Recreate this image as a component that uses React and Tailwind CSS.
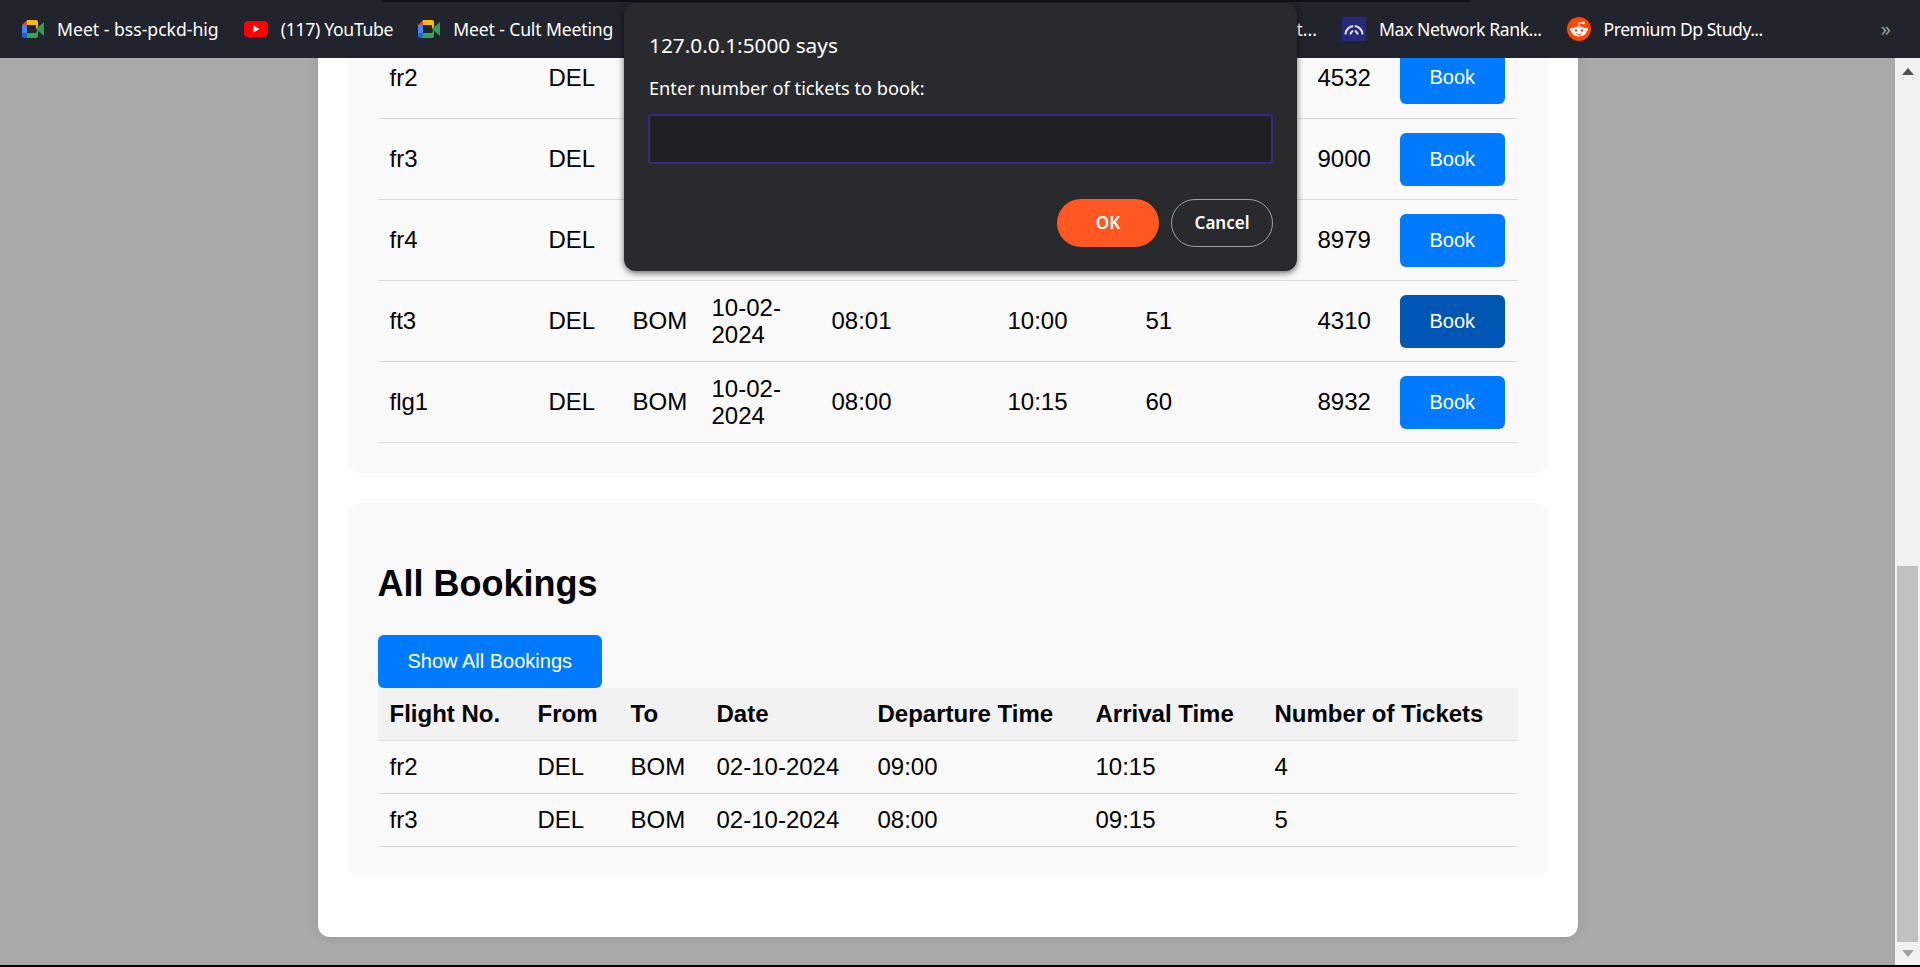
import React from 'react';

const flights = [
  { no: 'fr2', from: 'DEL', fare: 4532 },
  { no: 'fr3', from: 'DEL', fare: 9000 },
  { no: 'fr4', from: 'DEL', fare: 8979 },
  { no: 'ft3', from: 'DEL', to: 'BOM', date: '10-02-2024', dep: '08:01', arr: '10:00', seats: 51, fare: 4310, active: true },
  { no: 'flg1', from: 'DEL', to: 'BOM', date: '10-02-2024', dep: '08:00', arr: '10:15', seats: 60, fare: 8932 }
];

const bookings = [
  { no: 'fr2', from: 'DEL', to: 'BOM', date: '02-10-2024', dep: '09:00', arr: '10:15', tickets: 4 },
  { no: 'fr3', from: 'DEL', to: 'BOM', date: '02-10-2024', dep: '08:00', arr: '09:15', tickets: 5 }
];

const MeetIcon = () => (
  <svg viewBox="0 0 22 18" className="w-[22px] h-[18px] shrink-0">
    <path d="M5 0h9v5H5z" fill="#fbbc04" />
    <path d="M5 0v5H0z" fill="#ea4335" />
    <path d="M0 5h5v8H0z" fill="#4285f4" />
    <path d="M0 13h5v5H2a2 2 0 0 1-2-2z" fill="#1967d2" />
    <path d="M5 13h9v5H5z" fill="#34a853" />
    <path d="M14 0a2 2 0 0 1 2 2v5l-2 2-0-4z" fill="#fbbc04" />
    <path d="M14 13l2-4v7a2 2 0 0 1-2 2z" fill="#34a853" />
    <path d="M14 9l8-7v14z" fill="#2f9e57" />
    <path d="M5 5h9v8H5z" fill="#21242d" />
  </svg>
);

const YoutubeIcon = () => (
  <svg viewBox="0 0 24 16" className="w-6 h-4 shrink-0">
    <rect width="24" height="16" rx="4" fill="#ff0000" />
    <path d="M9.5 4.5v7l6-3.5z" fill="#ffffff" />
  </svg>
);

const MaxIcon = () => (
  <svg viewBox="0 0 24 24" className="w-6 h-6 shrink-0">
    <rect width="24" height="24" fill="#27297f" />
    <path d="M3.5 17.5a8.5 8.5 0 0 1 17 0" fill="none" stroke="#e8e8f4" strokeWidth="2" />
    <path d="M8.5 17.5a3.5 3.5 0 0 1 7 0" fill="none" stroke="#e8e8f4" strokeWidth="2" />
    <path d="M12 8v8" stroke="#27297f" strokeWidth="1.5" />
  </svg>
);

const RedditIcon = () => (
  <svg viewBox="0 0 24 24" className="w-6 h-6 shrink-0">
    <circle cx="12" cy="12" r="12" fill="#ff4500" />
    <ellipse cx="12" cy="14.5" rx="7.5" ry="5" fill="#ffffff" />
    <circle cx="4.8" cy="12.5" r="1.7" fill="#ffffff" />
    <circle cx="19.2" cy="12.5" r="1.7" fill="#ffffff" />
    <circle cx="9" cy="13.5" r="1.3" fill="#ff4500" />
    <circle cx="15" cy="13.5" r="1.3" fill="#ff4500" />
    <path d="M12 9.5V5.5l4 .8" fill="none" stroke="#ffffff" strokeWidth="1" />
    <circle cx="16.5" cy="6" r="1.4" fill="#ffffff" />
    <path d="M9 16.5c1.8 1.3 4.2 1.3 6 0" fill="none" stroke="#ff4500" strokeWidth="0.9" />
  </svg>
);

const Bookmark = ({ icon, label, className }) => (
  <div className="flex items-center gap-[13px]">
    {icon}
    <span className={className}>{label}</span>
  </div>
);

const BlueButton = ({ children, active }) => (
  <button className={`block h-[53px] px-[30px] rounded-md text-white text-[20px] ${active ? 'bg-[#0056b3]' : 'bg-[#007bff]'}`}>
    {children}
  </button>
);

const App = () => {
  return (
    <div className="relative h-screen flex flex-col overflow-hidden bg-black font-['Liberation_Sans',Arial,sans-serif] text-black">
      {/* bookmarks bar */}
      <div className="h-[58px] shrink-0 flex items-center pl-[22px] pr-[29px] gap-[25px] bg-[#21242d] text-white text-[17.6px] font-['Noto_Sans',sans-serif]">
        <Bookmark icon={<MeetIcon />} label="Meet - bss-pckd-hig" />
        <Bookmark icon={<YoutubeIcon />} label="(117) YouTube" className="tracking-[-0.3px]" />
        <Bookmark icon={<MeetIcon />} label="Meet - Cult Meeting" className="tracking-[-0.15px]" />
        <span className="flex-1 text-right">t...</span>
        <Bookmark icon={<MaxIcon />} label="Max Network Rank..." className="tracking-[-0.4px]" />
        <Bookmark icon={<RedditIcon />} label="Premium Dp Study..." className="tracking-[-0.5px]" />
        <span className="ml-[93px] text-[#9aa0a6] text-[20px]">»</span>
      </div>

      <div className="flex-1 min-h-0 flex mb-[2px]">
        {/* page, scrolled to its end */}
        <div className="flex-1 flex flex-col justify-end overflow-hidden bg-[#a9a9a9] pb-[28px]">
          <div className="w-[1260px] mx-auto shrink-0 bg-white rounded-xl px-[30px] pb-[60px] flex flex-col gap-[30px] shadow-[0_0_12px_rgba(0,0,0,0.1)]">
            <div className="bg-[#f9f9f9] rounded-b-xl px-[30px] pb-[30px]">
              <table className="w-[1140px] table-fixed border-collapse text-[24px] leading-[27px]">
                <colgroup>
                  <col className="w-[159px]" />
                  <col className="w-[84px]" />
                  <col className="w-[79px]" />
                  <col className="w-[120px]" />
                  <col className="w-[176px]" />
                  <col className="w-[138px]" />
                  <col className="w-[172px]" />
                  <col className="w-[82px]" />
                  <col className="w-[130px]" />
                </colgroup>
                <tbody>
                  {flights.map((f) => (
                    <tr key={f.no} className="h-[81px] border-b border-[#dddddd]">
                      <td className="px-3">{f.no}</td>
                      <td className="px-3">{f.from}</td>
                      <td className="px-3">{f.to}</td>
                      <td className="px-3">{f.date}</td>
                      <td className="px-3">{f.dep}</td>
                      <td className="px-3">{f.arr}</td>
                      <td className="px-3">{f.seats}</td>
                      <td className="px-3">{f.fare}</td>
                      <td className="px-3 pt-px">
                        <BlueButton active={f.active}>Book</BlueButton>
                      </td>
                    </tr>
                  ))}
                </tbody>
              </table>
            </div>

            <div className="bg-[#f9f9f9] rounded-xl px-[30px] pt-[60px] pb-[30px]">
              <h2 className="text-[36px] leading-[41px] font-bold mb-[31px]">All Bookings</h2>
              <BlueButton>Show All Bookings</BlueButton>
              <table className="w-[1140px] table-fixed border-collapse text-[24px] leading-[27px]">
                <colgroup>
                  <col className="w-[148px]" />
                  <col className="w-[93px]" />
                  <col className="w-[86px]" />
                  <col className="w-[161px]" />
                  <col className="w-[218px]" />
                  <col className="w-[179px]" />
                  <col className="w-[255px]" />
                </colgroup>
                <thead>
                  <tr className="h-[53px] bg-[#f2f2f2] border-b border-[#dddddd] text-left">
                    <th className="px-3 font-bold">Flight No.</th>
                    <th className="px-3 font-bold">From</th>
                    <th className="px-3 font-bold">To</th>
                    <th className="px-3 font-bold">Date</th>
                    <th className="px-3 font-bold">Departure Time</th>
                    <th className="px-3 font-bold">Arrival Time</th>
                    <th className="px-3 font-bold">Number of Tickets</th>
                  </tr>
                </thead>
                <tbody>
                  {bookings.map((b) => (
                    <tr key={b.no} className="h-[53px] border-b border-[#dddddd]">
                      <td className="px-3 pb-[2px]">{b.no}</td>
                      <td className="px-3 pb-[2px]">{b.from}</td>
                      <td className="px-3 pb-[2px]">{b.to}</td>
                      <td className="px-3 pb-[2px]">{b.date}</td>
                      <td className="px-3 pb-[2px]">{b.dep}</td>
                      <td className="px-3 pb-[2px]">{b.arr}</td>
                      <td className="px-3 pb-[2px]">{b.tickets}</td>
                    </tr>
                  ))}
                </tbody>
              </table>
            </div>
          </div>
        </div>

        {/* scrollbar */}
        <div className="w-[25px] shrink-0 flex flex-col justify-between bg-[#f1f1f1]">
          <div className="h-[26px] flex items-center justify-center">
            <svg viewBox="0 0 12 7" className="w-3 h-[7px]">
              <path d="M6 0l6 7H0z" fill="#505050" />
            </svg>
          </div>
          <div className="flex flex-col">
            <div className="h-[376px] mx-[2px] bg-[#c1c1c1]" />
            <div className="h-[23px] flex items-center justify-center">
              <svg viewBox="0 0 12 7" className="w-3 h-[7px]">
                <path d="M0 0h12L6 7z" fill="#a3a3a3" />
              </svg>
            </div>
          </div>
        </div>
      </div>

      {/* window edge peeking above the bar */}
      <div className="absolute left-[382px] top-0 w-[1088px] h-[2px] bg-[#111218] rounded-b-sm" />

      {/* browser prompt */}
      <div className="absolute left-[624px] top-[3px] w-[673px] h-[268px] bg-[#292a2d] rounded-xl shadow-[0_2px_6px_rgba(0,0,0,0.6)] pl-[25px] pr-[24px] pt-[29px] text-white font-['Noto_Sans',sans-serif]">
        <div className="text-[20.8px] leading-[27px]">127.0.0.1:5000 says</div>
        <div className="mt-[17px] text-[18.2px] leading-[24px]">Enter number of tickets to book:</div>
        <div className="mt-[14px] -ml-px h-[50px] rounded-[3px] border-2 border-[#312e81] bg-[#1f2023]" />
        <div className="mt-[35px] flex justify-end gap-[12px] text-[17px] font-semibold">
          <button className="w-[102px] h-[48px] rounded-full bg-[#ff5722] text-white">OK</button>
          <button className="w-[102px] h-[48px] rounded-full border border-[#a0a0a0] text-white">Cancel</button>
        </div>
      </div>
    </div>
  );
};

export default App;
